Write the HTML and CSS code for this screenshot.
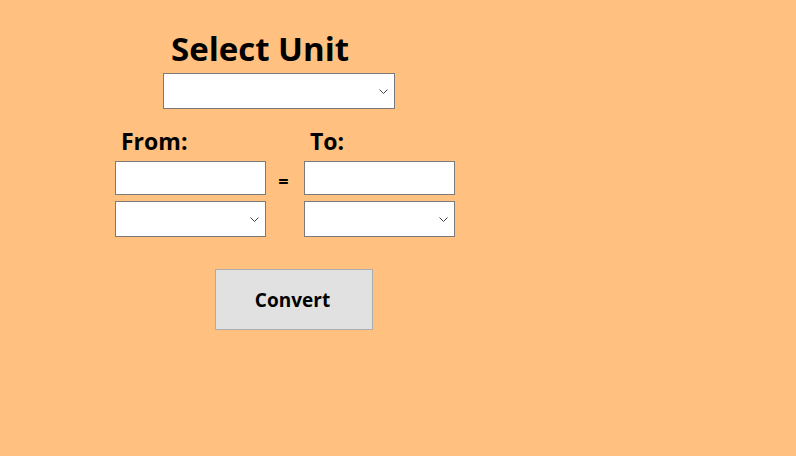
FILE: index.html
```html
<!DOCTYPE html>
<html>
<head>
<meta charset="utf-8">
<link rel="stylesheet" href="styles.css">
</head>
<body>
<div class="app">
  <h1 class="title">Select Unit</h1>
  <div class="combo combo-unit"><svg class="chev" width="9" height="5" viewBox="0 0 9 5"><path d="M0.5 0.5 L4.5 4.5 L8.5 0.5" fill="none" stroke="#444" stroke-width="1"/></svg></div>
  <div class="grid">
    <div class="label">From:</div>
    <div></div>
    <div class="label">To:</div>
    <div class="textbox"></div>
    <div class="equals">=</div>
    <div class="textbox"></div>
    <div class="combo"><svg class="chev" width="9" height="5" viewBox="0 0 9 5"><path d="M0.5 0.5 L4.5 4.5 L8.5 0.5" fill="none" stroke="#444" stroke-width="1"/></svg></div>
    <div></div>
    <div class="combo"><svg class="chev" width="9" height="5" viewBox="0 0 9 5"><path d="M0.5 0.5 L4.5 4.5 L8.5 0.5" fill="none" stroke="#444" stroke-width="1"/></svg></div>
  </div>
  <button class="convert">Convert</button>
</div>
</body>
</html>
```
FILE: styles.css
```css
html, body {
  margin: 0;
  padding: 0;
  background: #ffc080;
  font-family: "Open Sans", "Noto Sans", sans-serif;
  color: #000;
}
.app {
  width: 796px;
  height: 456px;
  display: flex;
  flex-direction: column;
  align-items: flex-start;
  padding-top: 28px;
  box-sizing: border-box;
}
.title {
  margin: 0 0 0 171px;
  font-size: 33px;
  font-weight: 700;
  line-height: 42px;
  height: 45px;
  letter-spacing: 0;
}
.combo {
  box-sizing: border-box;
  height: 36px;
  background: #fff;
  border: 1px solid #7a7a7a;
  display: flex;
  align-items: center;
  justify-content: flex-end;
  padding-right: 6px;
}
.combo-unit {
  width: 232px;
  margin-left: 163px;
}
.chev {
  display: block;
}
.grid {
  margin-left: 115px;
  margin-top: 17px;
  display: grid;
  grid-template-columns: 151px 38px 151px;
  grid-template-rows: 35px 34px 42px;
}
.label {
  font-size: 23px;
  font-weight: 700;
  line-height: 30px;
  padding-left: 6px;
}
.textbox {
  box-sizing: border-box;
  height: 34px;
  background: #fff;
  border: 1px solid #7a7a7a;
}
.grid .combo {
  margin-top: 6px;
}
.equals {
  font-size: 18px;
  font-weight: 700;
  text-align: center;
  line-height: 40px;
  padding-right: 3px;
}
.convert {
  margin-left: 215px;
  margin-top: 32px;
  width: 158px;
  height: 61px;
  box-sizing: border-box;
  background: #e1e1e1;
  border: 1px solid #adadad;
  font-family: "Open Sans", "Noto Sans", sans-serif;
  font-size: 19px;
  font-weight: 700;
  color: #000;
  padding: 0 3px 0 0;
}
```
